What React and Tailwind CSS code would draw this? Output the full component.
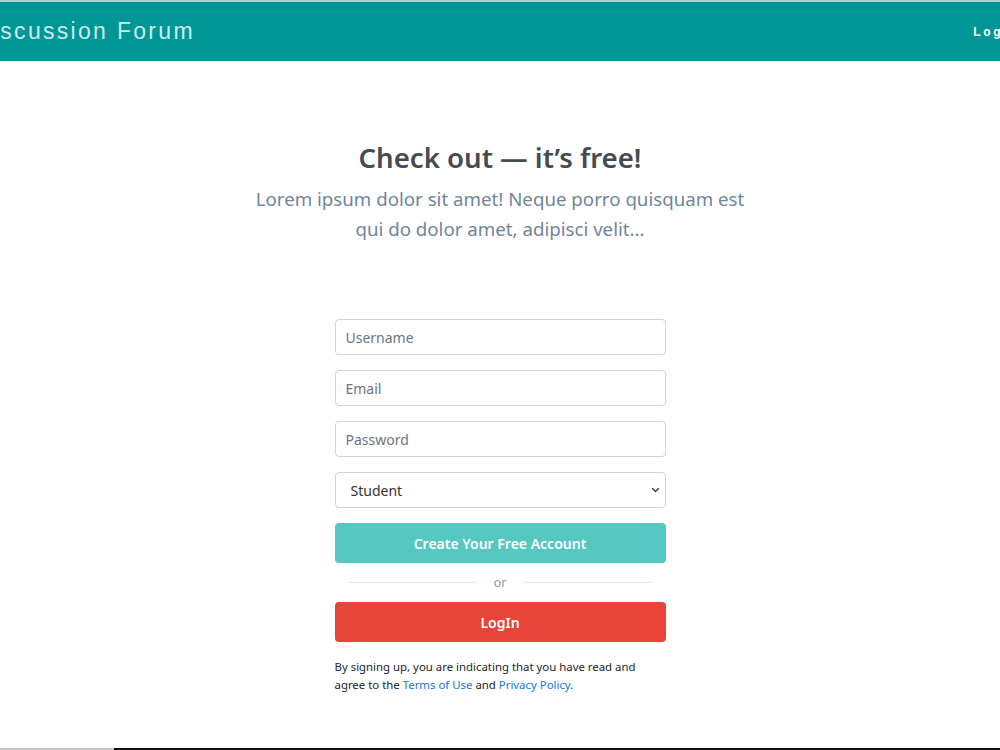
import React, { useState } from "react";

const font = { fontFamily: '"Noto Sans", "Open Sans", sans-serif' };

const Field = ({ placeholder, type = "text" }) => (
  <input
    type={type}
    placeholder={placeholder}
    className="w-full h-[36px] px-[10px] border border-[#ced4da] rounded-[4px] text-[14px] text-[#495057] placeholder:text-[#6c757d] outline-none"
  />
);

const App = () => {
  const [role, setRole] = useState("Student");

  return (
    <div className="min-h-[750px] flex flex-col bg-white" style={font}>
      <div className="h-[2px] bg-[#a9d3d3]" />
      <header className="h-[59px] bg-[#009696] flex items-center justify-between overflow-hidden">
        <h1
          className="-ml-[26px] text-[23px] tracking-[2.3px] text-[#c9ecea] whitespace-nowrap"
          style={{ fontFamily: '"Liberation Sans", Arial, sans-serif' }}
        >
          Discussion Forum
        </h1>
        <span
          className="-mr-[19px] text-[12px] font-bold tracking-[2.6px] text-white whitespace-nowrap"
          style={{ fontFamily: '"Liberation Sans", Arial, sans-serif' }}
        >
          Login
        </span>
      </header>

      <main className="flex flex-col items-center">
        <h2 className="mt-[78px] text-[27.6px] font-semibold text-[#474b4f] leading-[36px]">
          Check out — it’s free!
        </h2>
        <p className="mt-[9px] w-[520px] text-center text-[18.7px] leading-[30px] text-[#70859a]">
          Lorem ipsum dolor sit amet! Neque porro quisquam est qui do dolor amet, adipisci velit...
        </p>

        <form className="mt-[75px] w-[331px] flex flex-col" onSubmit={(e) => e.preventDefault()}>
          <div className="flex flex-col gap-[15px]">
            <Field placeholder="Username" />
            <Field placeholder="Email" type="email" />
            <Field placeholder="Password" type="password" />
            <div className="relative">
              <select
                value={role}
                onChange={(e) => setRole(e.target.value)}
                className="w-full h-[36px] pl-[15px] pr-8 appearance-none bg-white border border-[#ced4da] rounded-[4px] text-[14px] text-[#333] outline-none"
              >
                <option>Student</option>
                <option>Teacher</option>
              </select>
              <svg
                className="absolute right-[5px] top-[14px] pointer-events-none"
                width="11"
                height="8"
                viewBox="0 0 16 16"
              >
                <path d="M2 5l6 6 6-6" fill="none" stroke="#343a40" strokeWidth="2.5" strokeLinecap="round" strokeLinejoin="round" />
              </svg>
            </div>
          </div>

          <button className="mt-[15px] h-[40px] w-full rounded-[4px] bg-[#57c7c1] text-white text-[14px] font-semibold">
            Create Your Free Account
          </button>

          <div className="mt-[9px] mb-[10px] flex items-center gap-[16px] px-[14px]">
            <div className="flex-1 h-px bg-[#e6e6e6]" />
            <span className="text-[13px] text-[#9a9a9a] leading-[20px]">or</span>
            <div className="flex-1 h-px bg-[#e6e6e6]" />
          </div>

          <button className="h-[40px] w-full rounded-[4px] bg-[#e84437] text-white text-[14px] font-semibold">
            LogIn
          </button>

          <p className="mt-[16px] text-[11.4px] leading-[18px] text-[#212529] pr-[10px]">
            By signing up, you are indicating that you have read and agree to the{" "}
            <a href="#" className="text-[#1a73e8]">Terms of Use</a> and{" "}
            <a href="#" className="text-[#1a73e8]">Privacy Policy</a>.
          </p>
        </form>
      </main>

      <div className="mt-auto flex h-[2px]">
        <div className="w-[114px] bg-[#c4c4c4]" />
        <div className="flex-1 bg-[#111]" />
      </div>
    </div>
  );
};

export default App;
